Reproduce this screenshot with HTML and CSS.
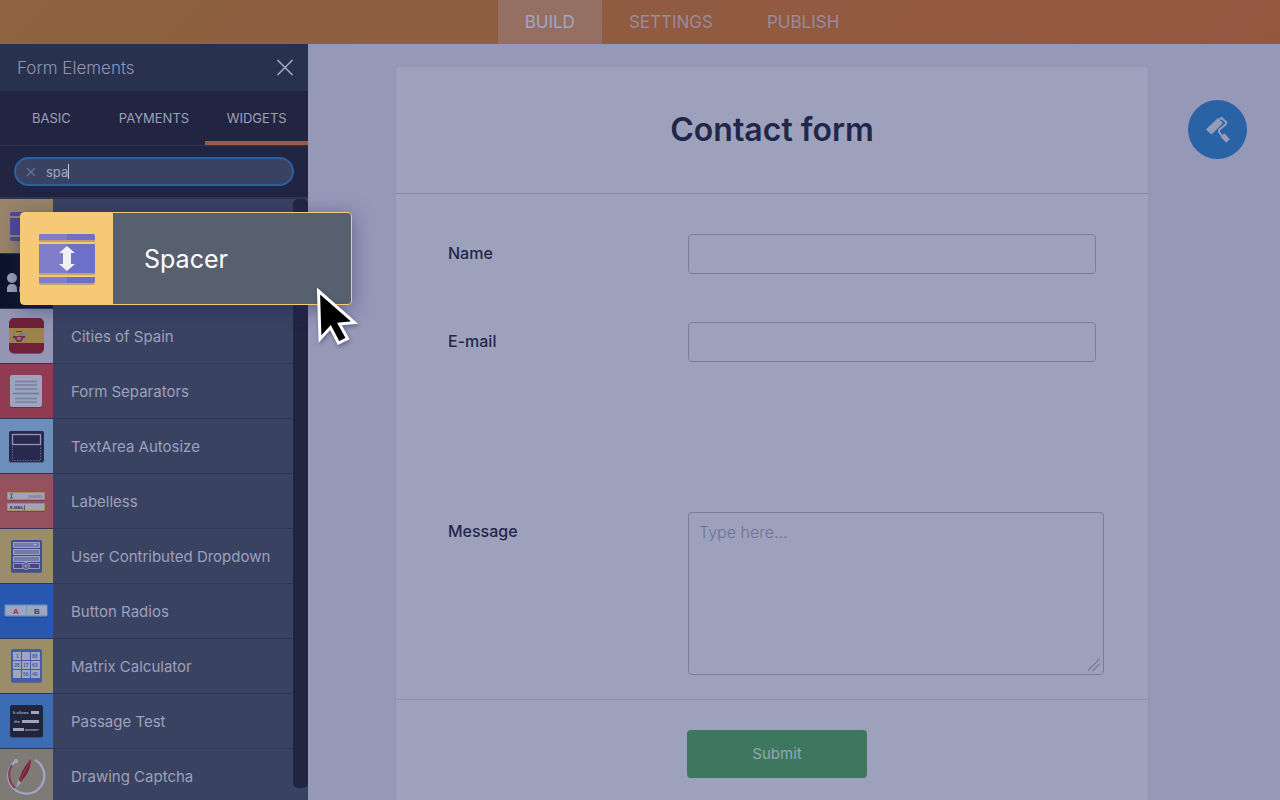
FILE: index.html
```html
<!DOCTYPE html>
<html lang="en">
<head>
<meta charset="utf-8">
<meta name="viewport" content="width=device-width, initial-scale=1">
<title>Form Builder</title>
<link rel="stylesheet" href="styles.css">
</head>
<body>
<header class="topbar">
  <nav class="modes">
    <a class="mode mode-active" href="#build">BUILD</a>
    <a class="mode" href="#settings">SETTINGS</a>
    <a class="mode" href="#publish">PUBLISH</a>
  </nav>
</header>
<div class="workspace">
  <aside class="sidebar">
    <div class="panel-head">
      <h2 class="panel-title">Form Elements</h2>
      <button class="close" type="button" aria-label="Close"><svg width="18" height="18" viewBox="0 0 18 18"><path d="M1.500 1l15 15M16.500 1l-15 15" fill="none" stroke="#a2a6c0" stroke-width="1.700"/></svg></button>
    </div>
    <div class="tabs">
      <button class="tab" type="button">BASIC</button>
      <button class="tab" type="button">PAYMENTS</button>
      <button class="tab tab-active" type="button">WIDGETS</button>
    </div>
    <div class="search-wrap">
      <div class="search">
        <button class="clear" type="button" aria-label="Clear"><svg width="10" height="10" viewBox="0 0 10 10"><path d="M1 1l8 8M9 1l-8 8" fill="none" stroke="#6b7392" stroke-width="1.200"/></svg></button>
        <input class="query" type="text" value="spa" aria-label="Search widgets">
      </div>
    </div>
    <div class="results">
      <ul class="widgets">
        <li class="widget">
          <svg class="icon tan" viewBox="0 0 53 54"><path fill="#4d4c99" d="M12 13h31v4H10v-2q0-2 2-2zM10 19h33v17H10zM10 38h33v4H12q-2 0-2-2z"/></svg>
        </li>
        <li class="widget">
          <svg class="icon black" viewBox="0 0 53 54"><g fill="#9ca1bb"><circle cx="12" cy="24" r="5"/><path d="M7 38v-3q0-5 5-5t5 5v3z"/><circle cx="25" cy="24" r="5"/><path d="M19 38v-3q0-5 6-5t6 5v3z"/></g></svg>
        </li>
        <li class="widget">
          <svg class="icon pale" viewBox="0 0 53 54">
            <rect x="9" y="10" width="35" height="35" rx="5" fill="#5e5f80"/>
            <rect x="9" y="9" width="35" height="35" rx="5" fill="#702039"/><path fill="#9c834b" d="M9 19h35v15H9z"/>
            <path fill="#857990" d="M13 24h2v8h-2zM23 24h2v8h-2z"/><path fill="#773046" d="M15 24h8v6L21 33h-4L15 30z"/><path fill="#a38549" d="M15 24h4v3h-4zM17 20h4v3h-4z"/><path fill="#777691" d="M19 24h4v3h-4zM17 28h4v3h-4z"/><path fill="#67344a" d="M13 27h2v2h-2zM23 27h2v2h-2zM16 22h6v1h-6z"/>
          </svg>
          <span class="name">Cities of Spain</span>
        </li>
        <li class="widget">
          <svg class="icon red" viewBox="0 0 53 54">
            <rect x="10" y="12" width="32" height="32" rx="2" fill="#712e49"/><rect x="10" y="11" width="32" height="32" rx="2" fill="#9ea2bc"/>
            <path stroke="#7b7e9e" stroke-width="1.600" d="M15 17.500h22M15 21h22M15 25h22M15 34.500h22M15 38h22"/><path stroke="#508f9b" stroke-width="1.600" d="M13 29.500h26"/>
          </svg>
          <span class="name">Form Separators</span>
        </li>
        <li class="widget">
          <svg class="icon sky" viewBox="0 0 53 54">
            <rect x="9" y="13" width="35" height="31" rx="2" fill="#53668f"/><rect x="9" y="12" width="35" height="31" rx="2" fill="#292950"/>
            <rect x="12.500" y="15.500" width="28" height="10" fill="none" stroke="#9397b4" stroke-width="1.300"/><path d="M12.500 27v14.500h28V27" fill="none" stroke="#65678b" stroke-dasharray="1.500 1.200"/>
          </svg>
          <span class="name">TextArea Autosize</span>
        </li>
        <li class="widget">
          <svg class="icon coral" viewBox="0 0 53 54">
            <path fill="#7b4156" d="M7 20h38v7H7zM7 31h38v7H7z"/><path fill="#a2a2b8" stroke="#a98a66" d="M7.500 18.500h37v7h-37zM7.500 29.500h37v7h-37z"/>
            <path d="M10 20h3M11.500 20v4M10 24h3M24.500 31v5" fill="none" stroke="#45466c" stroke-width=".8"/><text class="tiny" x="28" y="24" font-size="4" fill="#797d9b">(NAME)</text><text class="tiny" x="10" y="35" font-size="4" fill="#2d3158">E-MAIL</text>
          </svg>
          <span class="name">Labelless</span>
        </li>
        <li class="widget">
          <svg class="icon gold" viewBox="0 0 53 54">
            <rect x="11" y="12" width="31" height="32" rx="2" fill="#635f62"/><rect x="11" y="11" width="31" height="32" rx="2" fill="#404c93"/>
            <path fill="#747ba7" stroke="#9aa1c1" d="M13.500 13.500h26v5h-26zM13.500 20.500h26v5h-26zM13.500 27.500h26v5h-26z"/><path fill="#4d4484" stroke="#9298bc" d="M13.500 34.500h26v5h-26z"/><circle cx="26" cy="37" r="3.500" fill="#5b4d80" stroke="#9aa1c1"/><path stroke="#a6accb" stroke-width=".8" d="M24 37h4M26 35v4"/><path fill="#a6accb" d="M33 15h4l-2 2z"/>
          </svg>
          <span class="name">User Contributed Dropdown</span>
        </li>
        <li class="widget">
          <svg class="icon blue" viewBox="0 0 53 54">
            <rect x="4" y="21" width="44" height="13" fill="#224c96"/><rect x="4.500" y="20.500" width="43" height="12" rx="1" fill="#699cc8"/><path fill="#a0a4bd" d="M6 22h20v9H6zM27 22h20v9H27z"/>
            <text class="tiny" x="13" y="30" font-size="8" fill="#a32c4b">A</text><text class="tiny" x="34" y="30" font-size="8" fill="#414260">B</text>
          </svg>
          <span class="name">Button Radios</span>
        </li>
        <li class="widget">
          <svg class="icon gold" viewBox="0 0 53 54">
            <rect x="11" y="12" width="31" height="32" rx="2" fill="#6b6370"/><rect x="11" y="10" width="31" height="33" rx="2" fill="#455cae"/>
            <path fill="#a0a4bd" d="M13 13h8v8h-8zM22 13h8v8h-8zM31 13h9v8h-9zM13 22h8v8h-8zM22 22h8v8h-8zM31 22h9v8h-9zM13 31h8v8h-8zM22 31h8v8h-8zM31 31h9v8h-9z"/>
            <g class="tiny" font-size="5" fill="#465eae"><text x="16" y="19">1</text><text x="32" y="19">88</text><text x="14" y="28">28</text><text x="23" y="28">17</text><text x="32" y="28">63</text><text x="23" y="37">50</text><text x="32" y="37">49</text></g>
          </svg>
          <span class="name">Matrix Calculator</span>
        </li>
        <li class="widget">
          <svg class="icon azure" viewBox="0 0 53 54">
            <rect x="10" y="12" width="33" height="32" rx="2" fill="#334d7d"/><rect x="10" y="11" width="33" height="32" rx="2" fill="#22243e"/>
            <path fill="#a0a4bd" d="M31 17h8v3h-8zM22 26h17v3H22zM13 34h11v3H13z"/><g class="tiny" font-size="4" fill="#a0a4bd"><text x="13" y="20">It allows</text><text x="14" y="29">the</text><text x="25" y="37">answer</text></g>
          </svg>
          <span class="name">Passage Test</span>
        </li>
        <li class="widget">
          <svg class="icon grey" viewBox="0 0 53 54">
            <path d="M14 14A18 18 0 1 0 36 12" fill="none" stroke="#676471" stroke-width="2.500"/><path d="M16 12A18 18 0 1 0 35 11" fill="none" stroke="#a0a4bd" stroke-width="2.500"/><path d="M12 16A18 18 0 0 0 15 39" fill="none" stroke="#8b374d" stroke-width="2"/><circle cx="16" cy="12" r="2.300" fill="#a0a4bd"/><path d="M19 31l3-8q4-8 9-13 0 8-4 15l-6 8z" fill="#782137"/><path d="M18 31l3 3-5 5z" fill="#a0a4bd"/><path d="M20 32l10-20" stroke="#a93b50" stroke-width="1"/>
          </svg>
          <span class="name">Drawing Captcha</span>
        </li>
      </ul>
      <div class="track"><div class="thumb"></div></div>
    </div>
  </aside>
  <main class="canvas">
    <form class="form-card">
      <div class="form-head"><h1 class="form-title">Contact form</h1></div>
      <div class="fields">
        <div class="field"><label class="label" for="name">Name</label><input class="box" id="name" type="text"></div>
        <div class="field"><label class="label" for="email">E-mail</label><input class="box" id="email" type="email"></div>
        <div class="field field-long"><label class="label" for="message">Message</label><textarea class="box area" id="message" placeholder="Type here..."></textarea></div>
      </div>
      <div class="form-foot"><button class="submit" type="button">Submit</button></div>
    </form>
    <button class="paint" type="button" aria-label="Form designer">
      <svg width="26" height="28" viewBox="0 0 26 28"><path d="M2 13.500L13 3 17 7 6.500 17.500z" fill="#969dba" stroke="#969dba" stroke-width="1.500" stroke-linejoin="round"/><path d="M14.500 3l2-1 5 4.500-1 2-6.500 5.500 0 2 3 4" fill="none" stroke="#969dba" stroke-width="2" stroke-linejoin="round"/><path d="M17.500 19L23 25" stroke="#969dba" stroke-width="5"/></svg>
    </button>
  </main>
</div>
<div class="dragged">
  <div class="dragged-icon">
    <svg width="58" height="54" viewBox="0 -1 58 54">
      <path d="M1 4h56v5H1zM1 13h56v29H1zM1 46h56v4q0 2-2 2H3q-2 0-2-2z" fill="#c99d72"/>
      <path d="M3 1h52q2 0 2 2v4H1V3q0-2 2-2zM1 11h56v29H1zM1 44h56v4q0 2-2 2H3q-2 0-2-2z" fill="#6c70c8"/><path d="M3 1h26v6H1V3q0-2 2-2zM1 11h28v29H1zM1 44h28v6H3q-2 0-2-2z" fill="#807dcb"/>
      <path d="M29 13l8 7-4 0v11h4l-8 7-8-7h4V20h-4z" fill="#f1f0f5"/>
    </svg>
  </div>
  <span class="dragged-name">Spacer</span>
  <svg class="cursor" width="44" height="60" viewBox="0 0 44 60"><path d="M2.500 3l36 31.500-15 1.500 8 14.500-9 4.500-8-15.500L4 51z" fill="#000" stroke="#fff" stroke-width="3"/></svg>
</div>
</body>
</html>
```
FILE: styles.css
```css
* { box-sizing: border-box; }
body {
  margin: 0;
  height: 100vh;
  display: flex;
  flex-direction: column;
  overflow: hidden;
  font-family: Inter, "Liberation Sans", sans-serif;
  background: #9698b8;
}
button, input, textarea { font: inherit; margin: 0; }
button { border: 0; padding: 0; background: none; cursor: pointer; }
h1, h2, ul { margin: 0; padding: 0; }

.topbar {
  flex: none;
  display: flex;
  justify-content: center;
  height: 44px;
  padding-left: 84px;
  background: linear-gradient(135deg, #8d6341, #915a41 60%, #955640);
}
.modes { display: flex; }
.mode {
  display: flex;
  align-items: center;
  padding: 0 27px;
  color: #9a8a9c;
  font-size: 17px;
  font-weight: 400;
  text-decoration: none;
}
.mode-active { background: #957062; color: #a0a5c5; }

.workspace { flex: 1; min-height: 0; display: flex; }
.sidebar {
  flex: none;
  width: 308px;
  display: flex;
  flex-direction: column;
  background: #212542;
}
.panel-head {
  flex: none;
  display: flex;
  align-items: center;
  justify-content: space-between;
  height: 47px;
  padding: 0 14px 0 17px;
  background: #28324f;
}
.panel-title { color: #9095b2; font-size: 17px; font-weight: 300; }
.close { display: flex; }
.tabs {
  flex: none;
  display: grid;
  grid-template-columns: repeat(3, 1fr);
  height: 55px;
  border-bottom: 1px solid #2f3655;
}
.tab {
  padding-top: 4px;
  color: #9ca0bb;
  font-size: 13px;
  border-bottom: 4px solid transparent;
}
.tab-active { border-color: #985c43; }
.search-wrap {
  flex: none;
  padding: 11px 14px;
  border-bottom: 2px solid #2f3655;
}
.search {
  display: flex;
  align-items: center;
  gap: 10px;
  height: 29px;
  padding: 0 10px;
  border: 2px solid #2862a5;
  border-radius: 15px;
  background: #3a4262;
}
.clear { display: flex; }
.query {
  field-sizing: content;
  height: 15px;
  padding: 0;
  border: 0;
  border-right: 1px solid #c2c6d8;
  outline: 0;
  background: none;
  color: #a2a6c0;
  font-size: 13px;
}
.results { flex: 1; min-height: 0; display: flex; overflow: hidden; }
.widgets { flex: 1; list-style: none; background: #3a4262; overflow: hidden; }
.widget {
  display: flex;
  align-items: center;
  gap: 18px;
  height: 55px;
  border-bottom: 1px solid #2f3758;
}
.icon { flex: none; width: 53px; height: 54px; }
.name { color: #9ca1bb; font-size: 15px; }
.tiny { font-family: "Liberation Sans", sans-serif; font-weight: 700; }
.tan { background: #9a8469; }
.black { background: #0d122c; }
.pale { background: #9496b3; }
.red { background: #8f3c52; }
.sky { background: #6b8fba; }
.coral { background: #95525e; }
.gold { background: #9b8d6a; }
.blue { background: #2857b0; }
.azure { background: #3c6cb4; }
.grey { background: #7e7a76; }
.track { flex: none; width: 15px; background: #3a4262; padding-bottom: 12px; }
.thumb { height: 100%; border-radius: 5px; background: #212542; }

.canvas {
  flex: 1;
  min-width: 0;
  display: flex;
  align-items: flex-start;
  gap: 40px;
  padding: 23px 33px 0 88px;
}
.form-card {
  flex: 1;
  min-width: 0;
  min-height: 100%;
  border-radius: 3px 3px 0 0;
  background: #9ea1bb;
  box-shadow: 0 2px 4px #8e91b1;
  color: #1f274b;
}
.form-head { padding: 42px 52px; border-bottom: 1px solid #8688a7; text-align: center; }
.form-title { font-size: 32px; line-height: 42px; font-weight: 600; }
.fields {
  display: flex;
  flex-direction: column;
  gap: 48px;
  padding: 40px 44px 24px 52px;
  border-bottom: 1px solid #8e91af;
}
.field { display: grid; grid-template-columns: 240px 1fr; padding-right: 8px; }
.field-long { padding: 102px 0 0; }
.label { padding-top: 9px; font-size: 16px; line-height: 20px; font-weight: 500; }
.box {
  width: 100%;
  min-width: 0;
  height: 40px;
  padding: 9px 10px;
  border: 1px solid #797d9c;
  border-radius: 4px;
  outline: 0;
  background: transparent;
  color: #1f274b;
  font-size: 16px;
}
.area { display: block; height: 163px; resize: vertical; }
.area::-webkit-resizer {
  background: linear-gradient(135deg, transparent 44%, #7d819f 45%, #7d819f 51%, transparent 52%, transparent 65%, #7d819f 66%, #7d819f 72%, transparent 73%) 0 0 / 12px 12px no-repeat;
}
.box::placeholder { color: #6d7397; font-weight: 300; }
.form-foot { padding: 30px 0 22px 291px; }
.submit {
  width: 180px;
  height: 48px;
  padding-bottom: 2px;
  border-radius: 4px;
  background: #3e775f;
  color: #98a4b5;
  font-size: 15px;
}
.paint {
  flex: none;
  display: flex;
  align-items: center;
  justify-content: center;
  width: 59px;
  height: 59px;
  margin-top: 33px;
  border-radius: 50%;
  background: #2a62a6;
}

.dragged {
  position: absolute;
  left: 20px;
  top: 212px;
  display: flex;
  width: 332px;
  height: 93px;
  border: 1px solid #f5c978;
  border-radius: 4px;
  background: #57606e;
  box-shadow: 0 4px 20px rgba(36, 43, 85, .5);
}
.dragged-icon {
  display: flex;
  align-items: center;
  justify-content: center;
  width: 92px;
  background: #f5c976;
}
.dragged-name { align-self: center; padding-left: 31px; color: #fff; font-size: 25px; }
.cursor {
  position: absolute;
  left: 295px;
  top: 75px;
  filter: drop-shadow(1px 2px 2px rgba(20, 24, 60, .4));
}
```
